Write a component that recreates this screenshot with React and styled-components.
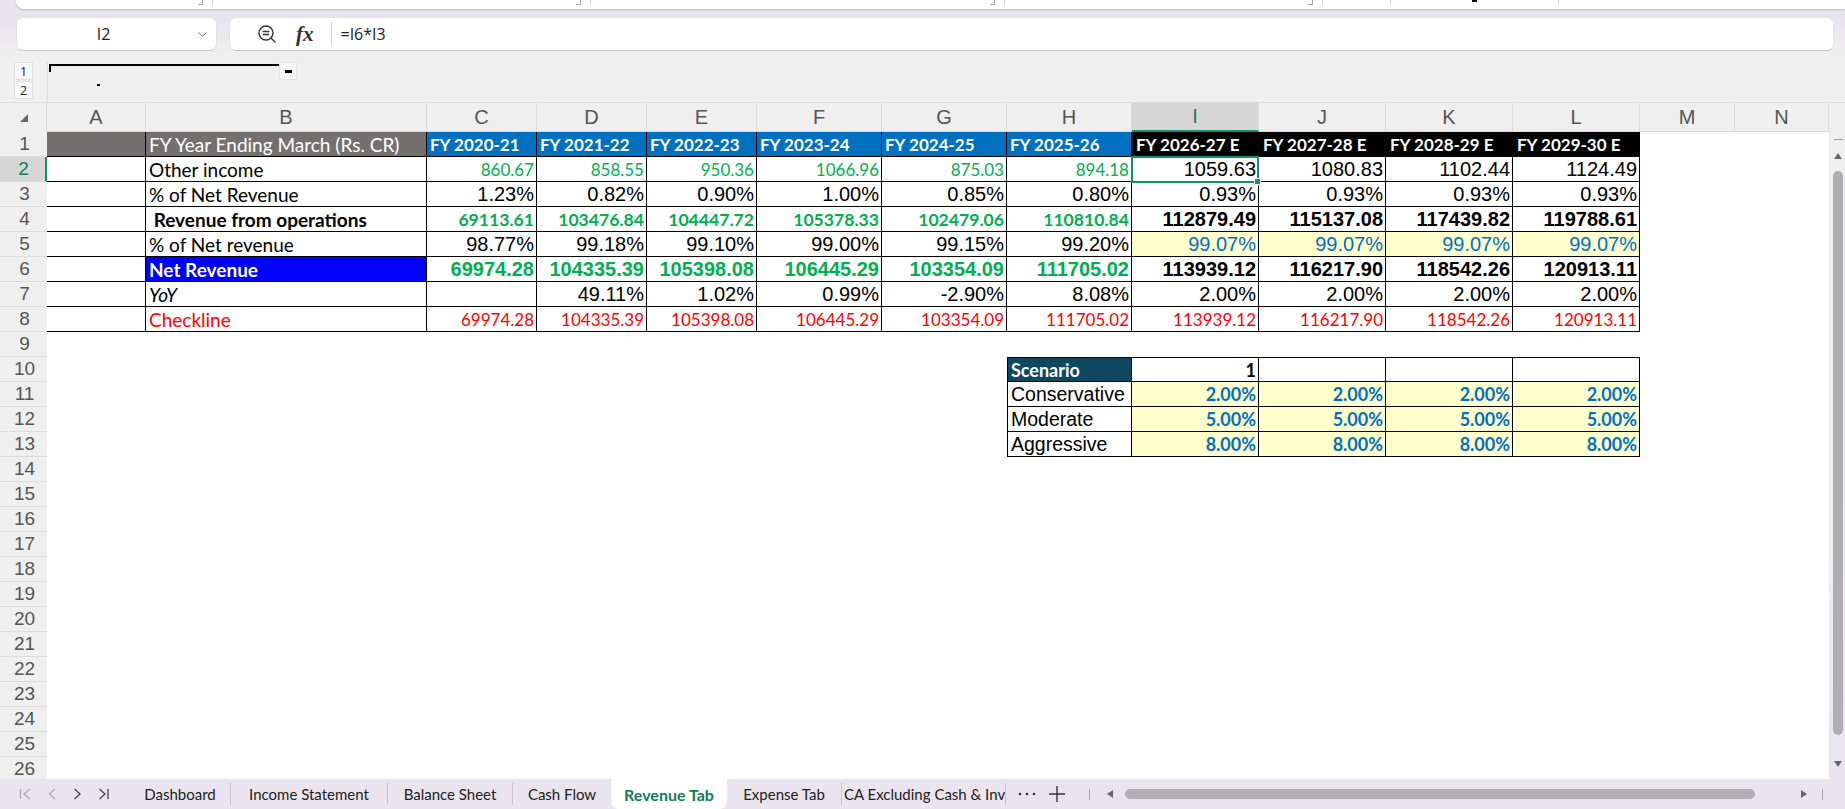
import React from "react";
import styled, { createGlobalStyle } from "styled-components";
import { ChevronDown } from "lucide-react";

const GREEN = "#14906a";

const Global = createGlobalStyle`
  html, body { margin: 0; padding: 0; height: 100%; overflow: hidden; }
  body { background: #efefef; font-family: "Liberation Sans", Arial, sans-serif; }
`;

const Page = styled.div`
  width: 1845px; height: 809px;
  display: flex; flex-direction: column;
  overflow: hidden;
  background: #efefef;
`;

/* remains of the ribbon + formula bar */
const TopBand = styled.div`
  height: 62px; flex: none;
  background: linear-gradient(#e8e3ee 0, #e8e3ee 18px, #efefef 52px);
  display: flex; flex-direction: column;
`;
const RibbonEdge = styled.div`
  height: 9px; margin: 0 0 0 16px;
  background: #fff;
  border-radius: 0 0 0 8px;
  box-shadow: 0 1px 2px #bdbac3;
  display: flex;
`;
const RibbonGroup = styled.div`
  position: relative;
  width: ${p => p.$w}px; height: 5px;
  border-right: 1px solid #d4d4d4;
  &::after {
    content: ${p => (p.$launcher ? '""' : "none")};
    position: absolute; right: 9px; top: 0;
    width: 4px; height: 4px;
    border-right: 1px solid #a5a5a5; border-bottom: 1px solid #a5a5a5;
  }
`;
const RibbonMark = styled.div`
  position: absolute; left: 81px; top: 0;
  width: 5px; height: 2px; background: #000;
`;
const FormulaRow = styled.div`
  display: flex; gap: 12px;
  margin: 8px 0 0 16px;
`;
const NameBox = styled.div`
  width: 201px; height: 34px; box-sizing: border-box;
  background: #fff; border: 1px solid #e4e4e4; border-bottom-color: #c6c6c6; border-radius: 7px;
  display: flex; align-items: center;
  font: 16px "Open Sans", sans-serif; color: #222;
  padding: 0 6px 0 0;
`;
const NameText = styled.span` flex: 1; text-align: center; padding-right: 5px; `;
const FormulaBox = styled.div`
  width: 1605px; height: 34px; box-sizing: border-box;
  background: #fff; border: 1px solid #e4e4e4; border-bottom-color: #c6c6c6; border-radius: 7px;
  display: flex; align-items: center;
  padding-left: 27px;
  font: 16px "Open Sans", sans-serif; color: #222;
`;
const FormulaIcons = styled.div`
  display: flex; align-items: center; gap: 19px;
  height: 24px; padding-right: 17px; margin-right: 9px;
  border-right: 1px solid #d0d0d0;
`;
const Fx = styled.span`
  font: italic bold 21px "Liberation Serif", serif; color: #333;
`;

/* outline gutter */
const OutlineBand = styled.div`
  height: 41px; flex: none; box-sizing: border-box;
  display: flex;
  border-bottom: 1px solid #dcdcdc;
`;
const OutlineLevels = styled.div`
  width: 48px; box-sizing: border-box;
  border-right: 1px solid #dcdcdc;
  padding: 0 0 0 14px;
  display: flex; flex-direction: column; gap: 1px;
`;
const LevelBtn = styled.div`
  width: 19px; height: 18px; box-sizing: border-box;
  background: #f8f8f8; border: 1px solid #e0e0e0;
  font: 12.5px "Open Sans", sans-serif; color: #222;
  display: flex; align-items: center; justify-content: center;
`;
const OutlineTrack = styled.div`
  position: relative; flex: 1;
`;
const OutlineBar = styled.div`
  position: absolute; left: 1px; top: 2px;
  width: 230px; height: 8px;
  border-top: 2px solid #000; border-left: 2px solid #000;
  box-sizing: border-box;
`;
const OutlineCollapse = styled.div`
  position: absolute; left: 231px; top: 0;
  width: 18px; height: 18px; box-sizing: border-box;
  background: #f8f8f8; border: 1px solid #e4e4e4;
  display: flex; align-items: center; justify-content: center;
  &::after { content: ""; width: 7px; height: 3px; background: #000; }
`;
const OutlineDot = styled.div`
  position: absolute; left: 49px; top: 22px;
  width: 3px; height: 2px; background: #000;
`;

/* sheet */
const COLS = [
  ["A", 99], ["B", 281], ["C", 110], ["D", 110], ["E", 110], ["F", 125], ["G", 125],
  ["H", 125], ["I", 127], ["J", 127], ["K", 127], ["L", 127], ["M", 95], ["N", 94],
];

const SheetArea = styled.div`
  flex: 1; min-height: 0;
  display: flex;
  overflow: hidden;
`;
const Sheet = styled.div`
  position: relative;
  display: grid;
  grid-template-columns: 47px ${COLS.map(c => c[1] + "px").join(" ")};
  grid-template-rows: 29px;
  grid-auto-rows: 25px;
  width: 1829px;
  background: #fff;
  align-content: start;
`;
const Corner = styled.div`
  background: #efefef;
  border-right: 1px solid #dcdcdc;
  display: flex; align-items: center; justify-content: center;
  &::after {
    content: ""; width: 0; height: 0; margin-left: 2px;
    border-style: solid; border-width: 0 0 8px 8px;
    border-color: transparent transparent #666 transparent;
  }
`;
const ColHead = styled.div`
  background: ${p => (p.$on ? "#d6d6d6" : "#efefef")};
  border-right: 1px solid #dcdcdc;
  border-bottom: ${p => (p.$on ? `2px solid ${GREEN}` : "1px solid #dcdcdc")};
  color: ${p => (p.$on ? "#107c5c" : "#555")};
  font-size: 20px;
  display: flex; align-items: center; justify-content: center;
  box-sizing: border-box;
`;
const RowHead = styled.div`
  background: ${p => (p.$on ? "#d6d6d6" : "#efefef")};
  border-bottom: 1px solid #dcdcdc;
  border-right: ${p => (p.$on ? `2px solid ${GREEN}` : "0")};
  color: ${p => (p.$on ? "#107c5c" : "#555")};
  font-size: 19px;
  padding-left: 2px;
  display: flex; align-items: center; justify-content: center;
  box-sizing: border-box;
`;
const Cell = styled.div`
  box-sizing: border-box;
  overflow: hidden; white-space: nowrap;
  display: flex; align-items: center;
  justify-content: ${p => (p.$left ? "flex-start" : "flex-end")};
  padding: 0 ${p => (p.$left ? 0 : 2)}px 0 ${p => (p.$left ? p.$pad || 3 : 0)}px;
  background: ${p => p.$bg || "transparent"};
  color: ${p => p.$color || "#000"};
  border-right: ${p => (p.$line ? "1px solid #000" : "0")};
  border-bottom: ${p => (p.$line ? "1px solid #000" : "0")};
  border-top: ${p => (p.$top ? "1px solid #000" : "0")};
  border-left: ${p => (p.$edge ? "1px solid #000" : "0")};
  font-family: ${p => (p.$arial ? '"Liberation Sans", Arial, sans-serif' : 'Lato, "Noto Sans", sans-serif')};
  font-size: ${p => p.$size || 17}px;
  font-weight: ${p => (p.$bold ? 700 : 400)};
  font-style: ${p => (p.$italic ? "italic" : "normal")};
`;
const Selection = styled.div`
  position: absolute;
  left: 1131px; top: 53px;
  width: 128px; height: 27px;
  box-sizing: border-box;
  border: 2px solid ${GREEN};
  pointer-events: none;
  &::after {
    content: ""; position: absolute; right: -4px; bottom: -4px;
    width: 5px; height: 5px; background: ${GREEN}; border: 1px solid #fff;
  }
`;
const VScroll = styled.div`
  width: 16px; flex: none;
  background: linear-gradient(#efefef 60%, #e9e4ee);
  display: flex; flex-direction: column; align-items: center;
  padding: 36px 0 0 2px;
  box-sizing: border-box;
`;
const VDash = styled.div`
  width: 9px; height: 1px; background: #999;
`;
const ArrowUp = styled.div`
  margin-top: 13px;
  border-style: solid; border-width: 0 4px 6px 4px;
  border-color: transparent transparent #666 transparent;
`;
const VThumb = styled.div`
  margin-top: 12px;
  width: 10px; height: 564px;
  border-radius: 5px; background: #b0adb3;
`;
const ArrowDown = styled.div`
  margin-top: 26px;
  border-style: solid; border-width: 6px 4px 0 4px;
  border-color: #666 transparent transparent transparent;
`;

/* bottom tab strip */
const TabBar = styled.div`
  height: 30px; flex: none;
  background: #e9e4ee;
  display: flex; align-items: center;
  font-family: Lato, "Noto Sans", sans-serif;
  font-size: 15px; color: #222;
`;
const NavBtns = styled.div`
  width: 130px; flex: none;
  display: flex; align-items: center; gap: 17px;
  padding-left: 19px; box-sizing: border-box;
`;
const Tab = styled.div`
  height: ${p => (p.$on ? 30 : 22)}px;
  box-sizing: border-box;
  flex: none;
  display: flex; align-items: center; justify-content: ${p => (p.$clip ? "flex-start" : "center")};
  width: ${p => p.$w}px;
  overflow: hidden; white-space: nowrap;
  border-right: ${p => (p.$on || p.$plain ? "0" : "1px solid #c8c4cc")};
  background: ${p => (p.$on ? "#fff" : "transparent")};
  color: ${p => (p.$on ? "#107c5c" : "#222")};
  font-size: ${p => (p.$on ? 16 : 15)}px;
  font-weight: ${p => (p.$on ? 700 : 400)};
  border-radius: ${p => (p.$on ? "0 0 8px 8px" : "0")};
  padding-left: ${p => (p.$clip ? 2 : 0)}px;
`;
const HScroll = styled.div`
  flex: 1; height: 30px;
  display: flex; align-items: center;
  padding-left: 23px;
`;
const Sep = styled.div`
  flex: none; width: 1px; height: 11px; background: #a9a6ad;
`;
const ArrowLeft = styled.div`
  flex: none; margin: 0 12px 0 17px;
  border-style: solid; border-width: 4px 6px 4px 0;
  border-color: transparent #666 transparent transparent;
`;
const HThumb = styled.div`
  flex: none; width: 630px; height: 10px; margin-top: -1px;
  border-radius: 5px; background: #b0adb3;
`;
const ArrowRight = styled.div`
  flex: none; margin: 0 15px 0 46px;
  border-style: solid; border-width: 4px 0 4px 6px;
  border-color: transparent transparent transparent #666;
`;

const Nav = ({ d, dim, w = 12 }) => (
  <svg width={w} height="14" viewBox={`0 0 ${w} 14`} fill="none" stroke={dim ? "#b0adb3" : "#444"} strokeWidth="1.3">
    <path d={d} />
  </svg>
);

const rows = [
  { label: "Other income", cells: [["860.67","858.55","950.36","1066.96","875.03","894.18"],["1059.63","1080.83","1102.44","1124.49"]], hist: { $color: "#00b050" }, est: { $arial: true, $size: 20 } },
  { label: "% of Net Revenue", cells: [["1.23%","0.82%","0.90%","1.00%","0.85%","0.80%"],["0.93%","0.93%","0.93%","0.93%"]], hist: { $arial: true, $size: 20 }, est: { $arial: true, $size: 20 } },
  { label: "Revenue from operations", boldLabel: true, cells: [["69113.61","103476.84","104447.72","105378.33","102479.06","110810.84"],["112879.49","115137.08","117439.82","119788.61"]], hist: { $color: "#00b050", $bold: true, $size: 17.6 }, est: { $arial: true, $bold: true, $size: 20 } },
  { label: "% of Net revenue", cells: [["98.77%","99.18%","99.10%","99.00%","99.15%","99.20%"],["99.07%","99.07%","99.07%","99.07%"]], hist: { $arial: true, $size: 20 }, est: { $arial: true, $size: 20, $color: "#0070c0", $bg: "#ffffcc" } },
  { label: "Net Revenue", net: true, cells: [["69974.28","104335.39","105398.08","106445.29","103354.09","111705.02"],["113939.12","116217.90","118542.26","120913.11"]], hist: { $arial: true, $size: 20, $bold: true, $color: "#00b050" }, est: { $arial: true, $bold: true, $size: 20 } },
  { label: "YoY", italic: true, cells: [["","49.11%","1.02%","0.99%","-2.90%","8.08%"],["2.00%","2.00%","2.00%","2.00%"]], hist: { $arial: true, $size: 20 }, est: { $arial: true, $size: 20 } },
  { label: "Checkline", red: true, cells: [["69974.28","104335.39","105398.08","106445.29","103354.09","111705.02"],["113939.12","116217.90","118542.26","120913.11"]], hist: { $color: "#ff0000" }, est: { $color: "#ff0000" } },
];

const scenarios = [
  ["Conservative", "2.00%"],
  ["Moderate", "5.00%"],
  ["Aggressive", "8.00%"],
];

const Blank = n => Array.from({ length: n }, (_, i) => <Cell key={"b" + i} />);

export default function App() {
  const grid = [];
  // column header row
  grid.push(<Corner key="corner" />);
  COLS.forEach(([c]) => grid.push(<ColHead key={c} $on={c === "I"}>{c}</ColHead>));

  // row 1
  grid.push(<RowHead key="r1">1</RowHead>);
  grid.push(<Cell key="1a" $line $bg="#757070" />);
  grid.push(<Cell key="1b" $left $line $bg="#757070" $color="#fff" $size={19}>FY Year Ending March (Rs. CR)</Cell>);
  ["2020-21","2021-22","2022-23","2023-24","2024-25","2025-26"].forEach(y =>
    grid.push(<Cell key={y} $left $line $pad={3} $bg="#0070c0" $color="#fff" $bold $size={17}>FY {y}</Cell>));
  ["2026-27","2027-28","2028-29","2029-30"].forEach(y =>
    grid.push(<Cell key={y} $left $pad={4} $bg="#000" $color="#fff" $bold $size={17}>FY {y} E</Cell>));
  grid.push(<Cell key="1m" />, <Cell key="1n" />);

  // rows 2 - 8
  rows.forEach((r, i) => {
    const n = i + 2;
    grid.push(<RowHead key={"r" + n} $on={n === 2}>{n}</RowHead>);
    grid.push(<Cell key={n + "a"} $line />);
    grid.push(
      <Cell key={n + "b"} $left $line $size={19} $bold={r.boldLabel || r.net} $italic={r.italic}
        $bg={r.net ? "#0000ff" : undefined}
        $color={r.net ? "#fff" : r.red ? "#ff0000" : "#000"}>
        {r.boldLabel ? <>&nbsp;{r.label}</> : r.label}
      </Cell>
    );
    r.cells[0].forEach((v, j) => grid.push(<Cell key={n + "h" + j} $line {...r.hist}>{v}</Cell>));
    r.cells[1].forEach((v, j) => grid.push(<Cell key={n + "e" + j} $line {...r.est}>{v}</Cell>));
    grid.push(<Cell key={n + "m"} />, <Cell key={n + "n"} />);
  });

  // rows 9 - 26, with the scenario block in H:L of rows 10 - 13
  for (let n = 9; n <= 26; n++) {
    grid.push(<RowHead key={"r" + n}>{n}</RowHead>);
    if (n >= 10 && n <= 13) {
      grid.push(<React.Fragment key={"pad" + n}>{Blank(7)}</React.Fragment>);
      if (n === 10) {
        grid.push(<Cell key="sc" $left $line $top $edge $bg="#0f4761" $color="#fff" $bold $size={18}>Scenario</Cell>);
        grid.push(<Cell key="sc1" $line $top $bold $size={18}>1</Cell>);
        grid.push(<Cell key="sc2" $line $top />, <Cell key="sc3" $line $top />, <Cell key="sc4" $line $top />);
      } else {
        const [name, val] = scenarios[n - 11];
        grid.push(<Cell key={name} $left $line $edge $arial $size={19.5}>{name}</Cell>);
        [0, 1, 2, 3].forEach(j =>
          grid.push(<Cell key={name + j} $line $bg="#ffffcc" $color="#0070c0" $bold $size={18}>{val}</Cell>));
      }
      grid.push(<React.Fragment key={"tail" + n}>{Blank(2)}</React.Fragment>);
    } else {
      grid.push(<React.Fragment key={"blank" + n}>{Blank(14)}</React.Fragment>);
    }
  }

  return (
    <Page>
      <Global />
      <TopBand>
        <RibbonEdge>
          <RibbonGroup $launcher $w={196} />
          <RibbonGroup $launcher $w={377} />
          <RibbonGroup $launcher $w={413} />
          <RibbonGroup $launcher $w={317} />
          <RibbonGroup $w={67} />
          <RibbonGroup $w={167}><RibbonMark /></RibbonGroup>
        </RibbonEdge>
        <FormulaRow>
          <NameBox>
            <NameText>I2</NameText>
            <ChevronDown size={15} color="#666" strokeWidth={1.5} />
          </NameBox>
          <FormulaBox>
            <FormulaIcons>
              <svg width="20" height="20" viewBox="0 0 20 20" fill="none" stroke="#333" strokeWidth="1.4">
                <circle cx="9" cy="9" r="7" />
                <path d="M5.8 7.500h6.400M5.800 10.500h6.400M14 14l4.500 4.500" />
              </svg>
              <Fx>fx</Fx>
            </FormulaIcons>
            =I6*I3
          </FormulaBox>
        </FormulaRow>
      </TopBand>
      <OutlineBand>
        <OutlineLevels>
          <LevelBtn>1</LevelBtn>
          <LevelBtn>2</LevelBtn>
        </OutlineLevels>
        <OutlineTrack>
          <OutlineBar />
          <OutlineCollapse />
          <OutlineDot />
        </OutlineTrack>
      </OutlineBand>
      <SheetArea>
        <Sheet>
          {grid}
          <Selection />
        </Sheet>
        <VScroll>
          <VDash />
          <ArrowUp />
          <VThumb />
          <ArrowDown />
        </VScroll>
      </SheetArea>
      <TabBar>
        <NavBtns>
          <Nav dim d="M1.500 2v10M11 2L5 7l6 5" />
          <Nav dim w={8} d="M7 2L1.500 7 7 12" />
          <Nav w={8} d="M1.500 2L7 7l-5.500 5" />
          <Nav d="M1.500 2L7 7l-5.500 5M10 2v10" />
        </NavBtns>
        <Tab $w={101}>Dashboard</Tab>
        <Tab $w={157}>Income Statement</Tab>
        <Tab $w={125}>Balance Sheet</Tab>
        <Tab $plain $w={98}>Cash Flow</Tab>
        <Tab $on $w={116}>Revenue Tab</Tab>
        <Tab $w={115}>Expense Tab</Tab>
        <Tab $clip $w={164}>CA Excluding Cash &amp; Investments</Tab>
        <svg width="42" height="18" viewBox="0 0 42 18" fill="#333">
          <circle cx="14" cy="9" r="1.3" />
          <circle cx="21" cy="9" r="1.3" />
          <circle cx="28" cy="9" r="1.3" />
        </svg>
        <svg width="18" height="18" viewBox="0 0 18 18" stroke="#333" strokeWidth="1.4" fill="none">
          <path d="M9 1v16M1 9h16" />
        </svg>
        <HScroll>
          <Sep />
          <ArrowLeft />
          <HThumb />
          <ArrowRight />
          <Sep />
        </HScroll>
      </TabBar>
    </Page>
  );
}
